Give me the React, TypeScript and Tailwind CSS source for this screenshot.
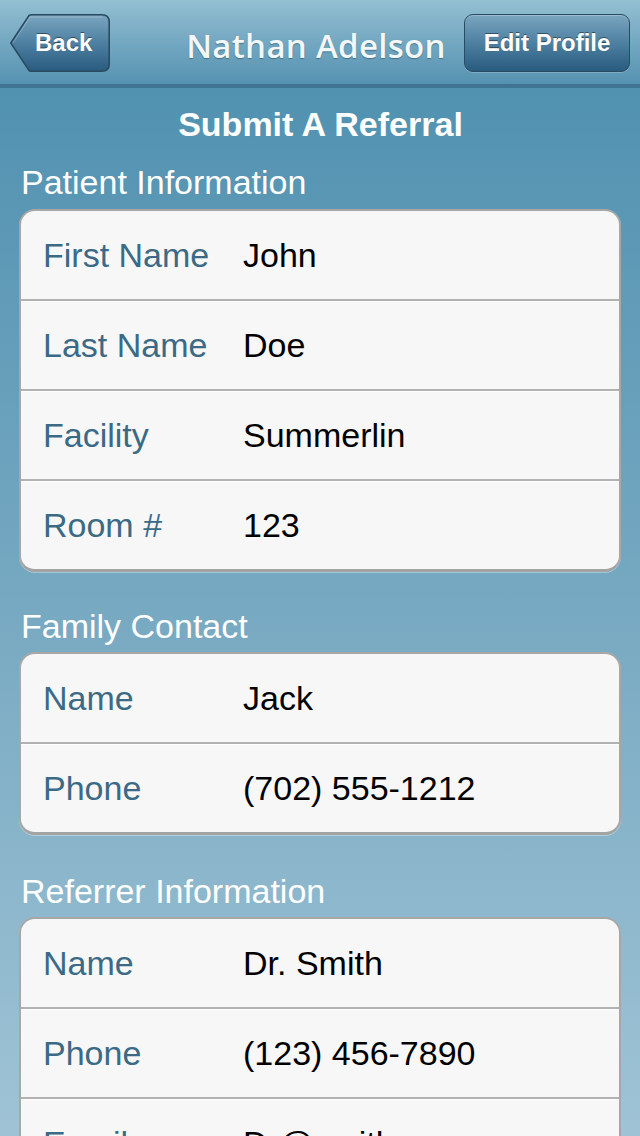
import React from "react";

type Row = { label: string; value: string };

const font = { fontFamily: '"Liberation Sans", Arial, Helvetica, sans-serif' };

function Card({ rows }: { rows: Row[] }) {
  return (
    <div className="rounded-[16px] border-2 border-[#a7a7a7] border-b-[3px] border-b-[#a3a3a3] bg-[#f7f7f7] overflow-hidden shadow-[0_1px_0_rgba(255,255,255,0.35)]">
      {rows.map((r, i) => (
        <div
          key={i}
          className={
            "flex items-center " +
            (i > 0 ? "h-[90px] border-t-2 border-[#b1b1b1] shadow-[inset_0_1px_0_#ffffff]" : "h-[88px]")
          }
        >
          <div className="w-[222px] shrink-0 pl-[22px] text-[34px] text-[#3b6a86] leading-none">
            {r.label}
          </div>
          <div className="text-[34px] text-black leading-none whitespace-nowrap">{r.value}</div>
        </div>
      ))}
    </div>
  );
}

function Header({ text, className }: { text: string; className: string }) {
  return (
    <div className={"h-[40px] pl-[2px] text-[34px] leading-[40px] text-white " + className}>
      {text}
    </div>
  );
}

export default function App() {
  return (
    <div
      className="h-[1136px] w-[640px] overflow-hidden bg-gradient-to-b from-[#4a8eae] via-[#74a7c0] to-[#9fc3d5]"
      style={font}
    >
      {/* Nav bar */}
      <div className="relative flex h-[88px] items-start justify-between bg-gradient-to-b from-[#93bfd2] to-[#5592b1] border-b-[4px] border-[#3f7592] px-[10px] pt-[14px]">
        {/* Back button */}
        <div className="relative h-[58px] w-[100px]">
          <svg className="absolute inset-0" width="100" height="58" viewBox="0 0 100 58">
            <defs>
              <linearGradient id="bb" x1="0" y1="0" x2="0" y2="1">
                <stop offset="0" stopColor="#7aa5bf" />
                <stop offset="0.5" stopColor="#4d80a1" />
                <stop offset="1" stopColor="#285b7e" />
              </linearGradient>
            </defs>
            <path
              d="M0.8 29 L19 1.5 Q20 0.8 22 0.8 L92 0.8 Q99.2 0.8 99.2 8 L99.2 50 Q99.2 57.2 92 57.2 L22 57.2 Q20 57.2 19 56.5 Z"
              fill="url(#bb)"
              stroke="#2a4b61"
              strokeWidth="1.6"
            />
            <path
              d="M3 29 L20 3 L92 3"
              fill="none"
              stroke="rgba(255,255,255,0.25)"
              strokeWidth="1"
            />
          </svg>
          <div className="relative flex h-full items-center pl-[25px] text-[24px] font-bold text-white [text-shadow:0_-1px_0_rgba(0,0,0,0.45)]">
            Back
          </div>
        </div>

        <div
          className="absolute left-0 right-0 top-[24px] text-center text-[33px] font-semibold leading-[44px] text-[#f2f7f9] pointer-events-none [text-shadow:0_1px_1px_rgba(40,80,100,0.6)] pr-[8px]"
          style={{ fontFamily: '"Open Sans", "Noto Sans", sans-serif', letterSpacing: "0.3px" }}
        >
          Nathan Adelson
        </div>

        {/* Edit Profile */}
        <div className="relative flex h-[58px] w-[166px] items-center justify-center rounded-[9px] border-[1.5px] border-[#2a4b61] bg-gradient-to-b from-[#7aa5bf] via-[#4d80a1] to-[#285b7e] shadow-[inset_0_1px_0_rgba(255,255,255,0.25),0_1px_0_rgba(255,255,255,0.2)] text-[24px] font-bold text-white [text-shadow:0_-1px_0_rgba(0,0,0,0.45)]">
          Edit Profile
        </div>
      </div>

      <div className="px-[19px]">
        <div className="mt-[16px] h-[40px] text-center text-[34px] font-bold leading-[40px] text-white pl-[1px]">
          Submit A Referral
        </div>

        <Header text="Patient Information" className="mt-[18px]" />
        <div className="mt-[7px]">
          <Card
            rows={[
              { label: "First Name", value: "John" },
              { label: "Last Name", value: "Doe" },
              { label: "Facility", value: "Summerlin" },
              { label: "Room #", value: "123" },
            ]}
          />
        </div>

        <Header text="Family Contact" className="mt-[34px]" />
        <div className="mt-[6px]">
          <Card
            rows={[
              { label: "Name", value: "Jack" },
              { label: "Phone", value: "(702) 555-1212" },
            ]}
          />
        </div>

        <Header text="Referrer Information" className="mt-[36px]" />
        <div className="mt-[6px]">
          <Card
            rows={[
              { label: "Name", value: "Dr. Smith" },
              { label: "Phone", value: "(123) 456-7890" },
              { label: "Email", value: "Dr@smith.com" },
            ]}
          />
        </div>
      </div>
    </div>
  );
}
